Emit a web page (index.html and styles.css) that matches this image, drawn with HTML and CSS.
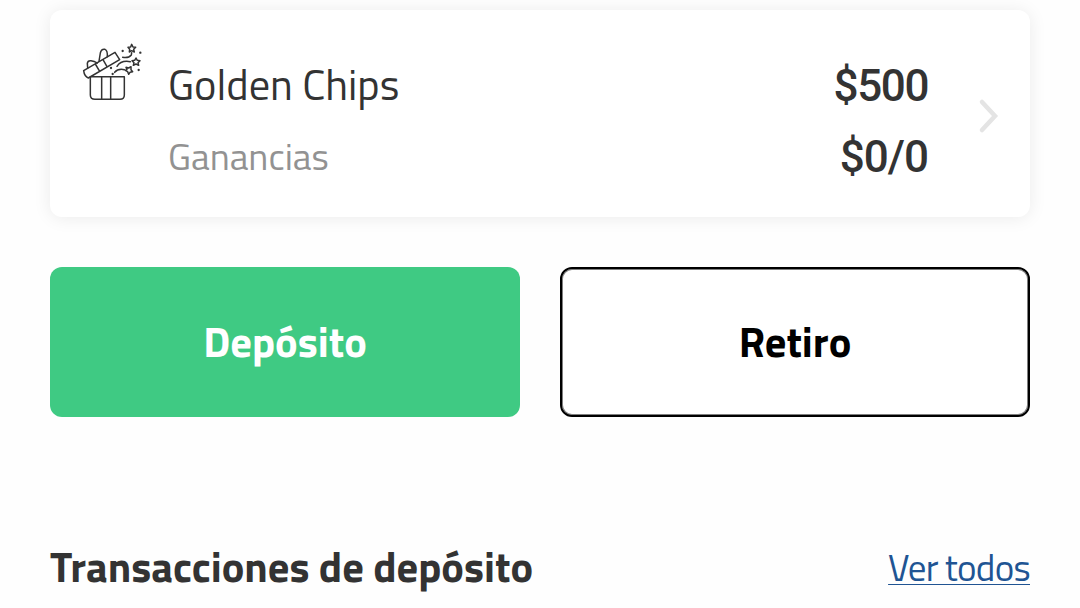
FILE: index.html
```html
<!DOCTYPE html>
<html lang="es">
<head>
<meta charset="utf-8">
<title>Golden Chips</title>
<link rel="stylesheet" href="styles.css">
</head>
<body>
<main class="page">
  <section class="card">
    <svg class="gift" viewBox="0 0 255 225" fill="none" stroke="#333" stroke-width="4.5" stroke-linejoin="round" stroke-linecap="round">
      <path d="M61 125H163V180Q163 193 150 193H75Q61 193 61 180ZM95 125V193M122 125V193"/>
      <path d="M41 107L135 52L149 74L55 129Q43 124 41 107ZM76 87L89 109M99 74L111 95"/>
      <path d="M53 99L52 85Q53 76 63 77Q73 78 82 84M87 79L91 54Q94 41 105 43Q113 46 112 65"/>
      <path d="M134 112Q144 100 163 104M141 94Q153 75 181 80M158 67Q176 70 184 60L185 53"/>
      <g stroke-width="4.5">
        <path d="M185 28L189 36L197 37L191 43L193 51L185 47L178 51L179 43L174 37L182 36Z"/>
        <path d="M198 69L202 76L210 77L204 83L206 91L198 87L190 91L192 83L186 77L194 76Z"/>
        <path d="M168 97L176 99L183 95L183 104L188 110L180 112L176 118L173 110L166 106L171 103Z"/>
      </g>
      <g fill="#333" stroke="none"><circle cx="158" cy="48" r="3.5"/><circle cx="211" cy="53" r="3.5"/><circle cx="206" cy="105" r="3.5"/><circle cx="123" cy="99" r="3.5"/><circle cx="128" cy="117" r="3.5"/></g>
    </svg>
    <div class="labels">
      <div class="name">Golden Chips</div>
      <div class="sub">Ganancias</div>
    </div>
    <div class="amounts">
      <div class="amount">$500</div>
      <div class="amount earnings">$0/0</div>
    </div>
    <svg class="chevron" viewBox="0 0 22 36" fill="none" stroke="#e4e4e4" stroke-width="4.5" stroke-linecap="round" stroke-linejoin="miter"><path d="M4 4L17 18L4 32"/></svg>
  </section>
  <div class="actions">
    <button class="btn deposit">Depósito</button>
    <button class="btn withdraw">Retiro</button>
  </div>
  <div class="heading">
    <h2 class="title">Transacciones de depósito</h2>
    <a class="all" href="#">Ver todos</a>
  </div>
</main>
</body>
</html>
```
FILE: styles.css
```css
* { box-sizing: border-box; }
body { margin: 0; background: #fefefe; color: #333; font-family: "Titillium Web", Roboto, sans-serif; overflow: hidden; }
.page { height: 608px; padding: 10px 50px 0; }
.card { display: flex; height: 207px; padding: 25px 30px 0 20px; border-radius: 12px; background: #fff; box-shadow: 0 1px 18px rgba(0, 0, 0, .08); }
.gift { width: 85px; height: 75px; flex: none; }
.labels { margin-left: 13px; flex: 1; padding-top: 13px; white-space: nowrap; }
.name { font-size: 42.4px; line-height: 72px; font-weight: 400; }
.sub { font-size: 37.3px; line-height: 72px; font-weight: 400; color: #929292; }
.amounts { padding-top: 16px; text-align: right; font-family: Roboto, sans-serif; }
.amount { font-size: 44px; line-height: 71px; font-weight: 500; letter-spacing: -1.4px; }
.earnings { letter-spacing: -1px; }
.chevron { width: 22px; height: 36px; margin: 63px 0 0 50px; flex: none; }
.actions { display: grid; grid-template-columns: 1fr 1fr; gap: 40px; margin-top: 50px; }
.btn { height: 150px; padding: 0 0 2px; border-radius: 12px; font: 700 42.5px/60px "Titillium Web", Roboto, sans-serif; }
.deposit { border: 0; background: #3fca83; color: #fff; }
.withdraw { border: 2px solid #000; background: #fff; color: #000; box-shadow: inset 0 0 0 1px rgba(0, 0, 0, .5); }
.heading { display: flex; justify-content: space-between; align-items: flex-start; margin-top: 119px; white-space: nowrap; }
.title { margin: 0; font-size: 42.5px; line-height: 60px; font-weight: 700; }
.all { font-size: 37px; line-height: 62px; font-weight: 400; letter-spacing: -.7px; word-spacing: -.6px; color: #205493; text-decoration: underline; text-decoration-thickness: 1px; text-underline-offset: 3px; text-decoration-skip-ink: none; }
```
